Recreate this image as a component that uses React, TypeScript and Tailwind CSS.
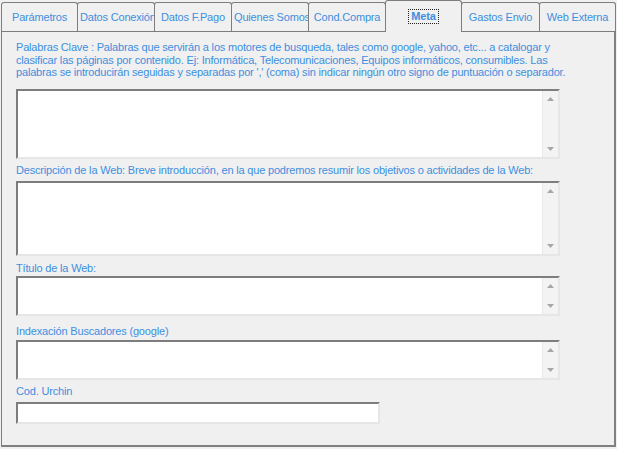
const tabs = [
  { label: "Parámetros", w: "w-[77px]" },
  { label: "Datos Conexión", w: "w-[78px]", left: true },
  { label: "Datos F.Pago", w: "w-[78px]" },
  { label: "Quienes Somos", w: "w-[78px]", left: true },
  { label: "Cond.Compra", w: "w-[78px]" },
  { label: "Meta", w: "w-[77px]", active: true },
  { label: "Gastos Envio", w: "w-[79px]" },
  { label: "Web Externa", w: "w-[77px]" },
];

function Arrow({ down }: { down?: boolean }) {
  return (
    <svg width="7" height="4" viewBox="0 0 7 4" className="block">
      <path d={down ? "M0 0h7L3.5 4z" : "M3.5 0L7 4H0z"} fill="#a7a7a7" />
    </svg>
  );
}

function Memo({ h }: { h: string }) {
  return (
    <div
      className={`${h} w-[544px] flex border-2 border-t-[#7d7d7d] border-l-[#7d7d7d] border-b-[#e6e6e6] border-r-[#e6e6e6] bg-white`}
    >
      <div className="flex-1" />
      <div className="w-[16px] bg-[#f3f3f3] border-l border-[#eaeaea] flex flex-col items-center justify-between py-[6px]">
        <Arrow />
        <Arrow down />
      </div>
    </div>
  );
}

function Label({ children, className = "" }: { children: React.ReactNode; className?: string }) {
  return <div className={`leading-[13px] whitespace-nowrap ${className}`}>{children}</div>;
}

export default function App() {
  return (
    <div className="w-[617px] h-[449px] bg-[#f0f0f0] text-[#3d8fdf] text-[11px] tracking-[-0.18px] font-['Liberation_Sans',Arial,sans-serif] overflow-hidden">
      <div className="flex items-end h-[32px] pl-[1px]">
        {tabs.map((t, i) =>
          t.active ? (
            <div
              key={t.label}
              className={`${t.w} -ml-px h-[32px] relative z-10 bg-[#f0f0f0] border-t border-l border-r border-[#7d7d7d] rounded-t-[3px] flex items-center justify-center`}
            >
              <span className="font-bold leading-[13px] px-[2px] border border-dotted border-[#202020]">
                {t.label}
              </span>
            </div>
          ) : (
            <div
              key={t.label}
              className={`${t.w} ${i > 0 ? "-ml-px" : ""} h-[29px] mb-px bg-[#f0f0f0] border-t border-l border-r border-[#7d7d7d] rounded-t-[3px] flex items-center overflow-hidden whitespace-nowrap leading-[13px] ${
                t.left ? "justify-start pl-[2px]" : "justify-center"
              }`}
            >
              {t.label}
            </div>
          )
        )}
      </div>

      <div className="-mt-px ml-[1px] w-[615px] h-[416px] border-t border-l border-[#7d7d7d] border-r-2 border-b-2 border-r-[#808080] border-b-[#808080] pl-[14px] pt-[9px] flex flex-col">
        <div className="leading-[12.5px] whitespace-nowrap">
          Palabras Clave : Palabras que servirán a los motores de busqueda, tales como google, yahoo, etc... a catalogar y
          <br />
          clasificar las páginas por contenido. Ej: Informática, Telecomunicaciones, Equipos informáticos, consumibles. Las
          <br />
          palabras se introducirán seguidas y separadas por ',' (coma) sin indicar ningún otro signo de puntuación o separador.
        </div>
        <div className="mt-[10px]">
          <Memo h="h-[70px]" />
        </div>

        <Label className="mt-[5px]">
          Descripción de la Web: Breve introducción, en la que podremos resumir los objetivos o actividades de la Web:
        </Label>
        <div className="mt-[4px]">
          <Memo h="h-[75px]" />
        </div>

        <Label className="mt-[6px]">Título de la Web:</Label>
        <div className="mt-[1px]">
          <Memo h="h-[40px]" />
        </div>

        <Label className="mt-[9px]">Indexación Buscadores (google)</Label>
        <div className="mt-[2px]">
          <Memo h="h-[40px]" />
        </div>

        <Label className="mt-[5px]">Cod. Urchin</Label>
        <div className="mt-[4px] w-[364px] h-[22px] bg-white border-2 border-t-[#7d7d7d] border-l-[#7d7d7d] border-b-[#e6e6e6] border-r-[#e6e6e6]" />
      </div>
    </div>
  );
}
